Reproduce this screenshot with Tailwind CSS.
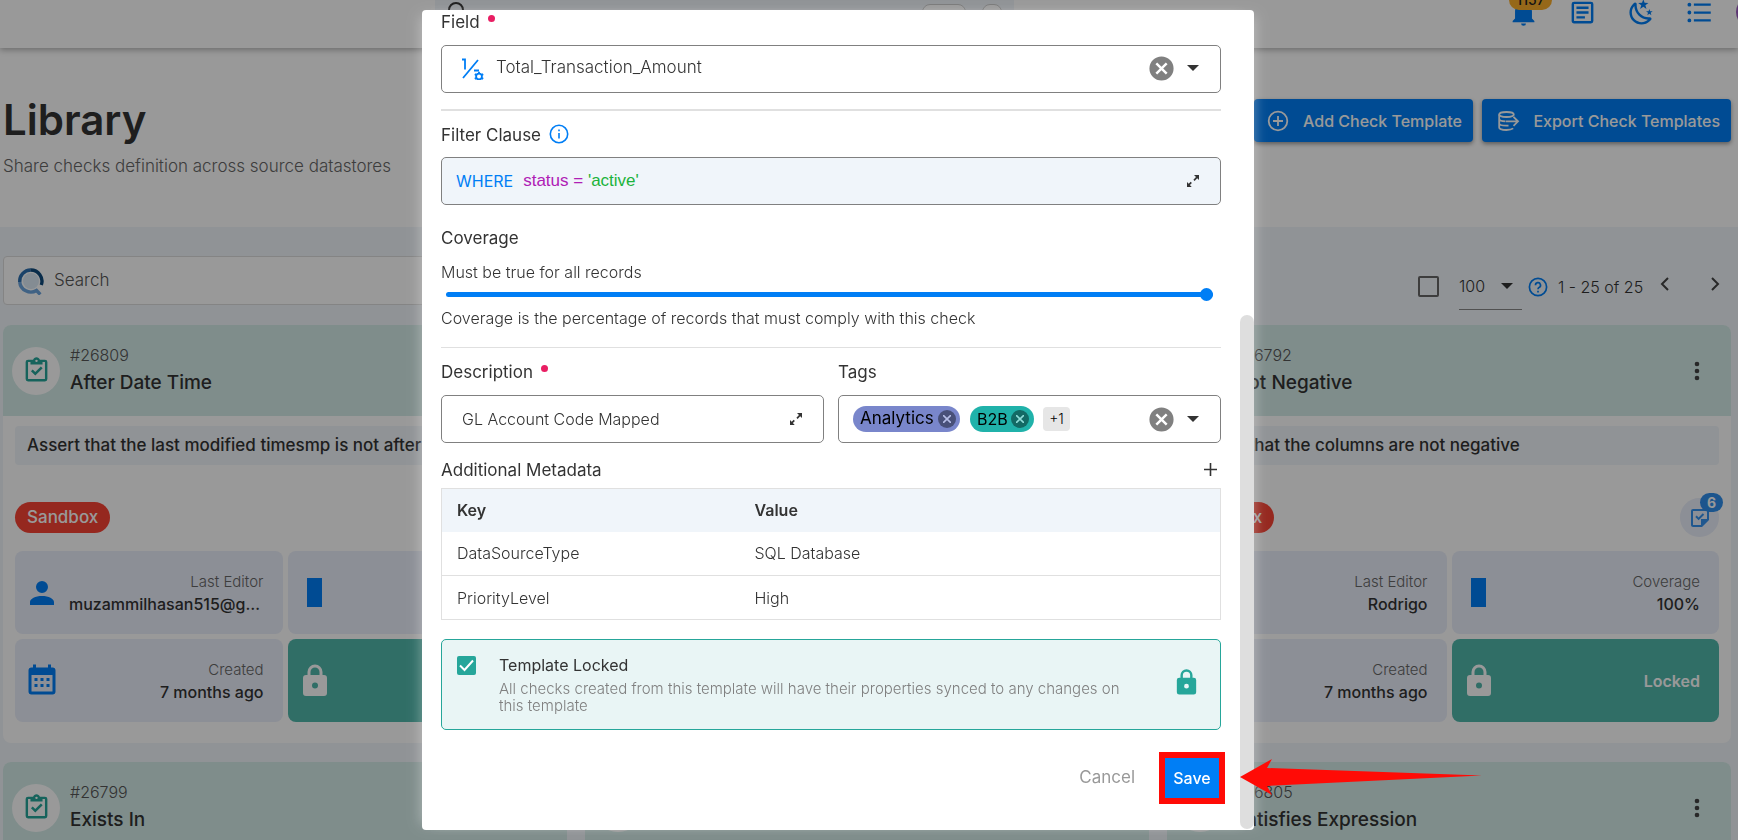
<!DOCTYPE html>
<html lang="en">
<head>
<meta charset="utf-8">
<meta name="viewport" content="width=device-width, initial-scale=1">
<title>Library</title>
<script src="https://cdn.jsdelivr.net/npm/@tailwindcss/browser@4"></script>
</head>
<body class="relative h-screen overflow-hidden bg-[#f0f5fa] font-[Inter,'Liberation_Sans',sans-serif] text-base text-[#333]">

<svg class="hidden" aria-hidden="true">
  <symbol id="clipboard" viewBox="0 0 24 24"><path d="M19 3h-4.18C14.4 1.84 13.3 1 12 1s-2.4.84-2.82 2H5a2 2 0 0 0-2 2v14a2 2 0 0 0 2 2h14a2 2 0 0 0 2-2V5a2 2 0 0 0-2-2m-7 0a1 1 0 0 1 0 2 1 1 0 0 1 0-2M5 19V5h2v2h10V5h2v14zM7.400 12.600l1.500-1.500 2.100 2.100 4.600-4.600 1.500 1.500-6.100 6.100z"/></symbol>
  <symbol id="person" viewBox="0 0 24 24"><path d="M12 4a4 4 0 1 1 0 8 4 4 0 0 1 0-8m0 10c4.420 0 8 1.790 8 4v2H4v-2c0-2.210 3.580-4 8-4"/></symbol>
  <symbol id="calendar" viewBox="0 0 24 24"><path d="M19 3h-1V1h-2v2H8V1H6v2H5a2 2 0 0 0-2 2v14a2 2 0 0 0 2 2h14a2 2 0 0 0 2-2V5a2 2 0 0 0-2-2m0 16H5V8h14zM7 10h2v2H7zm4 0h2v2h-2zm4 0h2v2h-2zm-8 4h2v2H7zm4 0h2v2h-2zm4 0h2v2h-2z"/></symbol>
  <symbol id="lock" viewBox="0 0 24 24"><path d="M12 17a2 2 0 1 0 0-4 2 2 0 0 0 0 4m6-9a2 2 0 0 1 2 2v10a2 2 0 0 1-2 2H6a2 2 0 0 1-2-2V10a2 2 0 0 1 2-2h1V6a5 5 0 0 1 10 0v2zm-6-5a3 3 0 0 0-3 3v2h6V6a3 3 0 0 0-3-3"/></symbol>
  <symbol id="dots" viewBox="0 0 24 24"><path d="M12 16a2 2 0 1 1 0 4 2 2 0 0 1 0-4m0-6a2 2 0 1 1 0 4 2 2 0 0 1 0-4m0-6a2 2 0 1 1 0 4 2 2 0 0 1 0-4"/></symbol>
  <symbol id="note-check" viewBox="0 0 24 24"><path d="M5 3a2 2 0 0 0-2 2v14c0 1.100.9 2 2 2h9l7-7V5a2 2 0 0 0-2-2zm0 2h14v8h-6v6H5zm5.600 9.300L7.300 11l1.400-1.400 1.900 1.900 4.200-4.200 1.400 1.400z"/></symbol>
  <symbol id="close-circle" viewBox="0 0 24 24"><path d="M12 2a10 10 0 1 0 0 20 10 10 0 0 0 0-20m5 13.590L15.590 17 12 13.410 8.410 17 7 15.590 10.590 12 7 8.410 8.410 7 12 10.590 15.590 7 17 8.410 13.410 12z"/></symbol>
  <symbol id="caret" viewBox="0 0 24 24"><path d="M6 9l6 6 6-6z"/></symbol>
  <symbol id="expand" viewBox="0 0 14 14"><path d="M8 1h5v5l-1.800-1.700-2.600 2.600-1.200-1.200 2.600-2.600zM1 8l1.700 1.700 2-2 1.200 1.200-2 2L5.700 13H1z"/></symbol>
</svg>

<header class="relative -mt-6 flex h-[72px] items-center bg-white shadow-[0_2px_6px_rgba(0,0,0,.3)]">
  <label class="ml-[25%] flex h-12 w-1/3 items-center gap-4 bg-[#f0f5fa] pl-3 pr-3">
    <svg class="size-5 shrink-0" viewBox="0 0 20 20" fill="none" stroke="#333" stroke-width="2"><circle cx="9" cy="8" r="7"/><path d="M14 13l5 5"/></svg>
    <input type="text" class="mt-2 min-w-0 flex-1 bg-transparent font-light outline-none placeholder:text-[#555]" placeholder="Search datastores, containers and fields">
    <kbd class="mt-2 h-6 w-11 rounded-lg border border-[#ccc] bg-white text-center font-[Inter] text-xs leading-6">Ctrl</kbd>
    <kbd class="mt-2 h-6 w-5 rounded-lg border border-[#ccc] bg-white text-center font-[Inter] text-xs leading-6">K</kbd>
  </label>
  <nav class="ml-auto flex shrink-0 items-center gap-[30px] text-[#007ef5]">
    <button class="relative" aria-label="Notifications">
      <svg class="size-[29px]" viewBox="0 0 24 24" fill="currentColor"><path d="M21 19v1H3v-1l2-2v-6c0-3.100 2.030-5.830 5-6.710V4a2 2 0 0 1 4 0v.29c2.970.88 5 3.610 5 6.710v6zm-7 2a2 2 0 0 1-4 0"/></svg>
      <span class="absolute -top-[8px] left-0 w-[43px] rounded-full bg-[#fbae2b] text-center text-sm leading-5 font-medium text-[#222]">1157</span>
    </button>
    <button aria-label="Documentation"><svg class="size-[29px]" viewBox="0 0 24 24" fill="currentColor"><path d="M19 3H5a2 2 0 0 0-2 2v14c0 1.100.9 2 2 2h14a2 2 0 0 0 2-2V5a2 2 0 0 0-2-2m0 16H5V5h14zM17 9H7V7h10zm0 4H7v-2h10zm-3 4H7v-2h7z"/></svg></button>
    <button aria-label="Theme"><svg class="size-[29px]" viewBox="0 0 24 24" fill="currentColor"><path d="M17.750 4.090l-2.530 1.940.91 3.060-2.630-1.810-2.630 1.810.91-3.060-2.530-1.940L12.440 4l1.060-3 1.060 3zm3.500 6.910l-1.640 1.250.59 1.980-1.700-1.170-1.700 1.170.59-1.980L15.750 11l2.060-.05L18.500 9l.69 1.950zm-2.280 4.950c.83-.08 1.720 1.100 1.190 1.850-.32.45-.66.87-1.080 1.270C15.170 23 8.840 23 4.940 19.070c-3.910-3.900-3.910-10.240 0-14.140.4-.4.82-.76 1.270-1.080.75-.53 1.930.36 1.850 1.190-.27 2.860.69 5.830 2.890 8.020a9.960 9.960 0 0 0 8.020 2.890m-1.640 2.020a12.080 12.080 0 0 1-7.800-3.470c-2.170-2.190-3.330-5-3.490-7.820-2.810 3.140-2.700 7.960.31 10.980 3.020 3.010 7.840 3.120 10.980.31"/></svg></button>
    <button aria-label="Menu"><svg class="size-[27px]" viewBox="0 0 24 24" fill="none" stroke="currentColor" stroke-width="2"><path d="M7 5h15M7 12h15M7 19h15"/><path d="M3 5h.01M3 12h.01M3 19h.01" stroke-width="3.400" stroke-linecap="round"/></svg></button>
    <span class="-mr-[30px] -ml-[7px] block size-8 rounded-full bg-[#9c5bc0]"></span>
  </nav>
</header>

<section class="flex h-[179px] items-start justify-between bg-white pr-[7px] pl-[3px]">
  <div class="pt-[46px]">
    <h1 class="text-[42px] leading-[52px] font-semibold">Library</h1>
    <p class="mt-2 text-[17px] leading-6 font-light text-[#666]">Share checks definition across source datastores</p>
  </div>
  <div class="flex gap-[9px] pt-[51px] text-base font-medium text-white">
    <button class="flex h-[43px] w-[219px] items-center justify-between rounded bg-[#007ef5] pr-[11px] pl-3 shadow-[0_2px_4px_rgba(0,0,0,.4)]">
      <svg class="size-6" viewBox="0 0 24 24" fill="none" stroke="currentColor" stroke-width="1.800"><circle cx="12" cy="12" r="9.300"/><path d="M12 7v10M7 12h10"/></svg>
      <span>Add Check Template</span>
    </button>
    <button class="flex h-[43px] w-[249px] items-center justify-between rounded bg-[#007ef5] pr-[11px] pl-[14px] shadow-[0_2px_4px_rgba(0,0,0,.4)]">
      <svg class="size-6" viewBox="0 0 24 24" fill="none" stroke="currentColor" stroke-width="1.800"><ellipse cx="10.500" cy="5.500" rx="7.300" ry="2.500"/><path d="M3.200 5.500v13c0 1.400 3.300 2.500 7.300 2.500 3.200 0 5.500-.7 6.700-1.600M3.200 9.800c0 1.400 2.600 2.500 6.300 2.500M3.200 14.200c0 1.400 3.300 2.400 7.300 2.400h2"/><path d="M10 12.300h12M17.500 7.800l4.500 4.500-4.500 4.500"/></svg>
      <span>Export Check Templates</span>
    </button>
  </div>
</section>

<main class="pt-[29px] pr-[7px] pl-[3px]">
  <div class="mb-5 flex h-[49px] items-center justify-between">
    <label class="flex h-[49px] w-1/2 items-center gap-[10px] rounded border border-[#dcdcdc] bg-white px-3">
      <svg class="size-7" viewBox="0 0 28 28" fill="none"><circle cx="15" cy="14" r="8" fill="#dce9f5"/><g stroke-width="3.400"><path d="M3.700 15a11.200 11.200 0 0 1 11-12" stroke="#2c6fb0"/><path d="M14.500 3a11.200 11.200 0 0 1 10.800 15" stroke="#0f4a7c"/><path d="M3.700 15a11.200 11.200 0 0 0 16.800 8.500l3.800 4" stroke="#6ba3dc"/></g></svg>
      <input type="text" aria-label="Search" class="min-w-0 flex-1 bg-transparent text-[17px] font-light outline-none placeholder:text-[#555]" placeholder="Search">
    </label>
    <div class="flex items-center pt-3 font-light">
      <input type="checkbox" aria-label="Select all" class="mr-5 size-[21px] appearance-none rounded-[2px] border-2 border-[#666]">
      <div class="flex h-[46px] w-[63px] items-center border-b border-[#888]">
        <select aria-label="Rows per page" class="w-10 appearance-none bg-transparent outline-none"><option>100</option></select>
        <svg class="-ml-1 size-6 shrink-0" fill="#333"><use href="#caret"/></svg>
      </div>
      <svg class="mr-[10px] ml-[6px] size-5" viewBox="0 0 20 20" fill="none" stroke="#007ef5" stroke-width="1.700"><circle cx="10" cy="10" r="8.600"/><path d="M7.500 8.200a2.500 2.500 0 1 1 3.600 2.200c-.8.500-1.100.9-1.100 1.900M10 13.800v1.600"/></svg>
      <span class="w-[82px] whitespace-nowrap">1 - 25 of 25</span>
      <button aria-label="Previous" class="mb-1 ml-[13px]"><svg class="size-6" viewBox="0 0 24 24" fill="none" stroke="#444" stroke-width="2"><path d="M15 5l-6 6 6 6"/></svg></button>
      <button aria-label="Next" class="mr-1 mb-1 ml-[26px]"><svg class="size-6" viewBox="0 0 24 24" fill="none" stroke="#444" stroke-width="2"><path d="M9 5l6 6-6 6"/></svg></button>
    </div>
  </div>
  <div id="cards" class="grid grid-cols-3 gap-x-[18px] gap-y-[19px]"></div>
</main>

<script>
const items = [
  ["#26809", "After Date Time", "Assert that the last modified timesmp is not after the date", "muzammilhasan515@gmail.com"],
  ["#26800", "Between", "Assert that the values are in range", "Rodrigo"],
  ["#26792", "Not Negative", "Assert that the columns are not negative", "Rodrigo"],
  ["#26799", "Exists In", "", "Rodrigo"],
  ["#26798", "Satisfies Expression", "", "Rodrigo"],
  ["#26805", "Satisfies Expression", "", "Rodrigo"],
];
document.getElementById("cards").innerHTML = items.map(([id, title, text, editor]) => `
<article class="min-w-0 overflow-hidden rounded-lg bg-white">
  <div class="flex h-[91px] items-center bg-[#d4ebe8] pr-5 pl-[9px]">
    <span class="grid size-12 place-items-center rounded-full bg-white"><svg class="size-[29px] fill-[#26a69a]"><use href="#clipboard"/></svg></span>
    <div class="ml-[10px] flex-1">
      <p class="text-base leading-5 font-light text-[#555]">${id}</p>
      <h2 class="mt-1 text-[19px] leading-7 font-medium">${title}</h2>
    </div>
    <button aria-label="More"><svg class="size-7 fill-[#444]"><use href="#dots"/></svg></button>
  </div>
  <div class="px-3 pt-[10px] pb-[21px]">
    <p class="h-[39px] truncate rounded bg-[#f0f5fa] px-3 text-[17px] leading-[39px] font-medium">${text}</p>
    <div class="mt-[27px] mb-[8px] flex h-[51px] items-center justify-between">
      <span class="rounded-full bg-[#f84435] px-3 text-[17px] leading-[31px] font-medium text-white">Sandbox</span>
      <span class="relative grid size-[39px] place-items-center rounded-full bg-[#e9eefa]"><svg class="size-6 fill-[#3592ee]"><use href="#note-check"/></svg>
        <span class="absolute -top-[5px] -right-1 w-[23px] rounded-full bg-[#2f8eeb] text-center text-sm leading-[19px] font-bold text-white">6</span></span>
    </div>
    <div class="grid grid-cols-2 gap-[5px] text-right">
      <div class="flex h-[83px] items-center gap-[9px] rounded-lg bg-[#e9eefa] pr-[19px] pl-[9px]"><svg class="size-9 shrink-0 fill-[#007ef5]"><use href="#person"/></svg><div class="min-w-0 flex-1"><p class="text-[15px] leading-[22px] font-light text-[#666]">Last Editor</p><p class="truncate leading-[22px] font-medium">${editor}</p></div></div>
      <div class="flex h-[83px] items-center rounded-lg bg-[#e9eefa] pr-[19px] pl-[19px]"><span class="h-[29px] w-[15px] bg-[#007ef5]"></span><div class="flex-1"><p class="text-[15px] leading-[22px] font-light text-[#666]">Coverage</p><p class="leading-[22px] font-medium">100%</p></div></div>
      <div class="flex h-[83px] items-center gap-[9px] rounded-lg bg-[#e9eefa] pr-[19px] pl-[9px]"><svg class="size-9 shrink-0 fill-[#007ef5]"><use href="#calendar"/></svg><div class="min-w-0 flex-1"><p class="text-[15px] leading-[22px] font-light text-[#666]">Created</p><p class="leading-[22px] font-medium">7 months ago</p></div></div>
      <div class="flex h-[83px] items-center rounded-lg bg-[#51b7ab] pr-[19px] pl-[9px] text-white"><svg class="size-9 fill-white"><use href="#lock"/></svg><p class="flex-1 font-semibold">Locked</p></div>
    </div>
  </div>
</article>`).join("");
</script>

<div class="fixed inset-0 flex justify-center bg-black/40 py-[10px] pr-[62px]">
  <div role="dialog" aria-label="Check template" class="relative flex w-[832px] flex-col rounded-[4px] bg-white pt-px pr-[33px] pl-[19px] shadow-[-7px_0_12px_-6px_rgba(255,255,255,.35),7px_0_12px_-6px_rgba(255,255,255,.35)]">
    <label for="field" class="flex h-6 shrink-0 items-center gap-2 text-[17px]">Field <span class="mb-[10px] size-[7px] rounded-full bg-[#e91e63]"></span></label>
    <div class="mt-[10px] flex h-12 shrink-0 items-center rounded-[5px] border border-[#808080] px-[15px] pb-[2px]">
      <svg class="ml-1 size-6 shrink-0" viewBox="0 0 24 24" fill="none" stroke="#007ef5" stroke-width="1.800"><path d="M1 3.500h3v10M17 4L2 22M13 14.500h5" /><circle cx="18" cy="20.500" r="2.900"/><path d="M18 15.700v1.900M18 23.400v1.900M13.800 18.100l1.700 1M20.500 21.900l1.700 1M13.800 22.900l1.700-1M20.500 19.100l1.700-1"/></svg>
      <select id="field" class="ml-[11px] min-w-0 flex-1 appearance-none bg-transparent text-[17px] font-light outline-none"><option>Total_Transaction_Amount</option></select>
      <button aria-label="Clear field"><svg class="size-[29px] fill-[#808080]"><use href="#close-circle"/></svg></button>
      <svg class="ml-[5px] size-6 fill-[#333]"><use href="#caret"/></svg>
    </div>
    <hr class="mt-4 h-[2px] shrink-0 border-0 bg-[#e0e0e0]">
    <div class="mt-[13px] flex h-6 shrink-0 items-center gap-2 text-[17px]">Filter Clause
      <svg class="mb-1 size-5" viewBox="0 0 20 20" fill="none" stroke="#007ef5" stroke-width="1.600"><circle cx="10" cy="10" r="8.700"/><path d="M10 9v5.500M10 5.500v1.800"/></svg></div>
    <div class="mt-[9px] flex h-12 shrink-0 items-center rounded-[5px] border border-[#808080] bg-[#f0f5fa] pr-5 pl-[14px]">
      <span class="text-[#007ef5]">WHERE</span>
      <div role="textbox" aria-label="Filter clause" contenteditable="true" class="ml-[10px] flex-1 font-['Liberation_Sans',sans-serif] text-[17px] text-[#af20b5] outline-none">status = <span class="text-[#1cb33c]">'active'</span></div>
      <button aria-label="Expand filter"><svg class="size-[14px] fill-[#333]"><use href="#expand"/></svg></button>
    </div>
    <label for="coverage" class="mt-[21px] h-6 shrink-0 text-[17px] leading-6">Coverage</label>
    <p class="mt-[10px] h-6 shrink-0 font-light">Must be true for all records</p>
    <div class="mr-2 ml-[5px] flex h-[21px] shrink-0 items-center">
      <input id="coverage" type="range" min="0" max="100" value="100" class="h-[5px] w-full appearance-none rounded-full bg-[#007ef5] outline-none [&::-webkit-slider-thumb]:size-[13px] [&::-webkit-slider-thumb]:appearance-none [&::-webkit-slider-thumb]:rounded-full [&::-webkit-slider-thumb]:bg-[#007ef5]">
    </div>
    <p class="mt-px h-6 shrink-0 font-light">Coverage is the percentage of records that must comply with this check</p>
    <hr class="mt-[17px] shrink-0 border-[#e0e0e0]">
    <div class="mt-[13px] grid shrink-0 grid-cols-2 gap-[14px]">
      <div>
        <label for="description" class="flex h-6 items-center gap-2 text-[17px]">Description <span class="mb-[10px] size-[7px] rounded-full bg-[#e91e63]"></span></label>
        <div class="mt-[10px] flex h-12 items-center rounded-[5px] border border-[#808080] px-5">
          <input id="description" type="text" value="GL Account Code Mapped" class="min-w-0 flex-1 bg-transparent font-light outline-none">
          <button aria-label="Expand description"><svg class="size-[14px] fill-[#333]"><use href="#expand"/></svg></button>
        </div>
      </div>
      <div>
        <span class="flex h-6 items-center text-[17px]">Tags</span>
        <div class="mt-[10px] flex h-12 items-center rounded-[5px] border border-[#808080] px-[14px] text-black">
          <span class="flex h-[26px] w-[107px] items-center justify-between rounded-full bg-[#7986cb] pr-1 pl-[7px] text-[17px]">Analytics
            <button aria-label="Remove Analytics" class="grid size-[18px] shrink-0 place-items-center rounded-full bg-[#485079]"><svg class="size-2" viewBox="0 0 8 8" stroke="#b5bde6" stroke-width="1.600"><path d="M0 0l8 8M8 0L0 8"/></svg></button></span>
          <span class="ml-[10px] flex h-[26px] w-16 items-center justify-between rounded-full bg-[#20b2aa] pr-[5px] pl-[7px]">B2B
            <button aria-label="Remove B2B" class="grid size-[18px] shrink-0 place-items-center rounded-full bg-[#136a65]"><svg class="size-2" viewBox="0 0 8 8" stroke="#8edcd7" stroke-width="1.600"><path d="M0 0l8 8M8 0L0 8"/></svg></button></span>
          <span class="ml-[9px] w-[27px] rounded bg-[#e6e6e6] text-center text-sm leading-6 font-light">+1</span>
          <button aria-label="Clear tags" class="ml-auto"><svg class="size-[29px] fill-[#808080]"><use href="#close-circle"/></svg></button>
          <svg class="mr-px ml-[5px] size-6 fill-[#333]"><use href="#caret"/></svg>
        </div>
      </div>
    </div>
    <div class="mt-4 flex h-6 shrink-0 items-center justify-between pr-1 text-[17px]">Additional Metadata
      <button aria-label="Add metadata" class="mb-1"><svg class="size-[13px]" viewBox="0 0 13 13" stroke="#333" stroke-width="1.600"><path d="M0 6.500h13M6.500 0v13"/></svg></button></div>
    <table class="mt-[5px] w-full shrink-0 border-collapse border border-[#e0e0e0] text-left">
      <thead><tr class="h-[43px] bg-[#f0f5fa]"><th class="w-[298px] px-[15px] font-semibold">Key</th><th class="px-[15px] font-semibold">Value</th></tr></thead>
      <tbody class="font-light">
        <tr class="h-11"><td class="px-[15px]">DataSourceType</td><td class="px-[15px]">SQL Database</td></tr>
        <tr class="h-11 border-t border-[#e0e0e0]"><td class="px-[15px]">PriorityLevel</td><td class="px-[15px]">High</td></tr>
      </tbody>
    </table>
    <div class="mt-[19px] flex h-[91px] shrink-0 rounded-[5px] border border-[#26a69a] bg-[#e9f5f5] pl-[15px]">
      <span class="mt-4 grid size-[19px] shrink-0"><input id="locked" type="checkbox" checked class="col-start-1 row-start-1 size-[19px] appearance-none rounded-[2px] bg-[#26a69a]"><svg class="pointer-events-none col-start-1 row-start-1 size-[19px]" viewBox="0 0 19 19" fill="none" stroke="#fff" stroke-width="2"><path d="M3 9.500l4.500 4.500L16 4.500"/></svg></span>
      <label for="locked" class="mt-[13px] ml-[23px] flex-1"><span class="block leading-6">Template Locked</span><span class="mt-[3px] block text-[15px] leading-[17px] font-light text-[#808080]">All checks created from this template will have their properties synced to any changes on this template</span></label>
      <svg class="mt-7 mr-[19px] ml-9 size-[29px] shrink-0 fill-[#26a69a]"><use href="#lock"/></svg>
    </div>
    <div class="-mr-1 mt-[22px] flex shrink-0 items-center justify-end gap-6">
      <button class="text-[17px] text-[#999]">Cancel</button>
      <button class="h-[52px] w-[66px] border-6 border-[#ff0b06] bg-[#007ef5] text-center font-medium text-white">Save</button>
    </div>
    <span class="absolute right-0 bottom-px h-[514px] w-[14px] rounded-full bg-[#dedede]"></span>
    <svg class="absolute bottom-[34px] left-[818px] h-[38px] w-[242px]" viewBox="0 0 242 38" fill="#ff0b06"><path d="M0 19L32 1l-5 9 215 7.500L27 28l5 9z"/></svg>
  </div>
</div>
</body>
</html>
